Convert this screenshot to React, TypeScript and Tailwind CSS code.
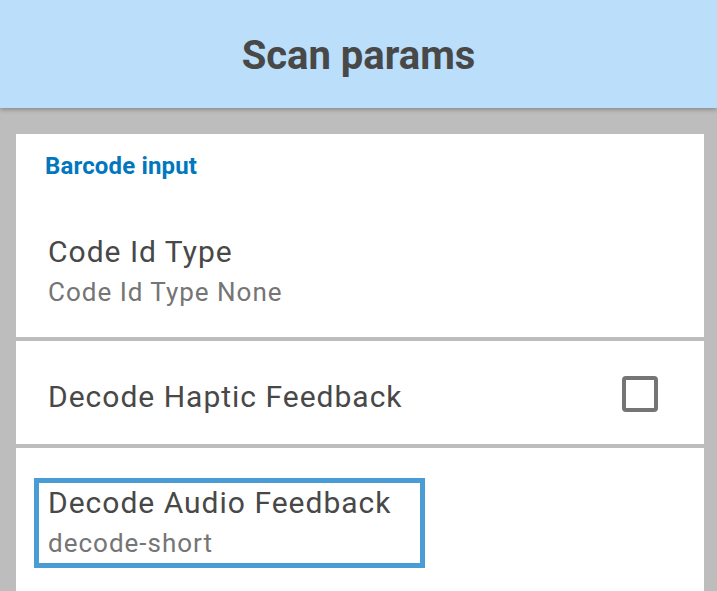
import React from "react";

const font = { fontFamily: "Roboto, 'Noto Sans', sans-serif" };

export default function App() {
  return (
    <div
      className="w-[717px] h-[591px] overflow-hidden bg-[#bdbdbd] flex flex-col"
      style={font}
    >
      <header className="relative z-10 h-[108px] shrink-0 bg-[#bbdefb] shadow-[0_2px_4px_rgba(0,0,0,0.25)] flex justify-center pt-[32px]">
        <h1 className="text-[40px] leading-[48px] font-bold text-[#484848]">
          Scan params
        </h1>
      </header>

      <div className="flex flex-col gap-[4px] pt-[26px] pl-[16px] pr-[13px]">
        <section className="h-[203px] bg-white pl-[29px] pt-[20px]">
          <div className="text-[24px] leading-[24px] font-bold tracking-[0.15px] text-[#0277bd]">
            Barcode input
          </div>
          <div className="pl-[3px] mt-[56px]">
            <div className="text-[30px] leading-[36px] tracking-[1px] text-[#484848]">
              Code Id Type
            </div>
            <div className="mt-[7px] text-[26px] leading-[30px] tracking-[1px] text-[#757575]">
              Code Id Type None
            </div>
          </div>
        </section>

        <section className="h-[103px] bg-white flex items-start justify-between pl-[32px] pr-[46px]">
          <div className="mt-[38px] text-[30px] leading-[36px] tracking-[1px] text-[#484848]">
            Decode Haptic Feedback
          </div>
          <div className="mt-[35px] w-[36px] h-[36px] rounded-[4px] border-[4px] border-[#757575]" />
        </section>

        <section className="h-[150px] bg-white pl-[18px] pt-[30px]">
          <div className="w-[391px] h-[90px] border-[5px] border-[#4a9dd4] pl-[9px] pt-[2px]">
            <div className="text-[30px] leading-[36px] tracking-[1px] text-[#484848]">
              Decode Audio Feedback
            </div>
            <div className="mt-[7px] text-[26px] leading-[30px] tracking-[1px] text-[#757575]">
              decode-short
            </div>
          </div>
        </section>
      </div>
    </div>
  );
}
